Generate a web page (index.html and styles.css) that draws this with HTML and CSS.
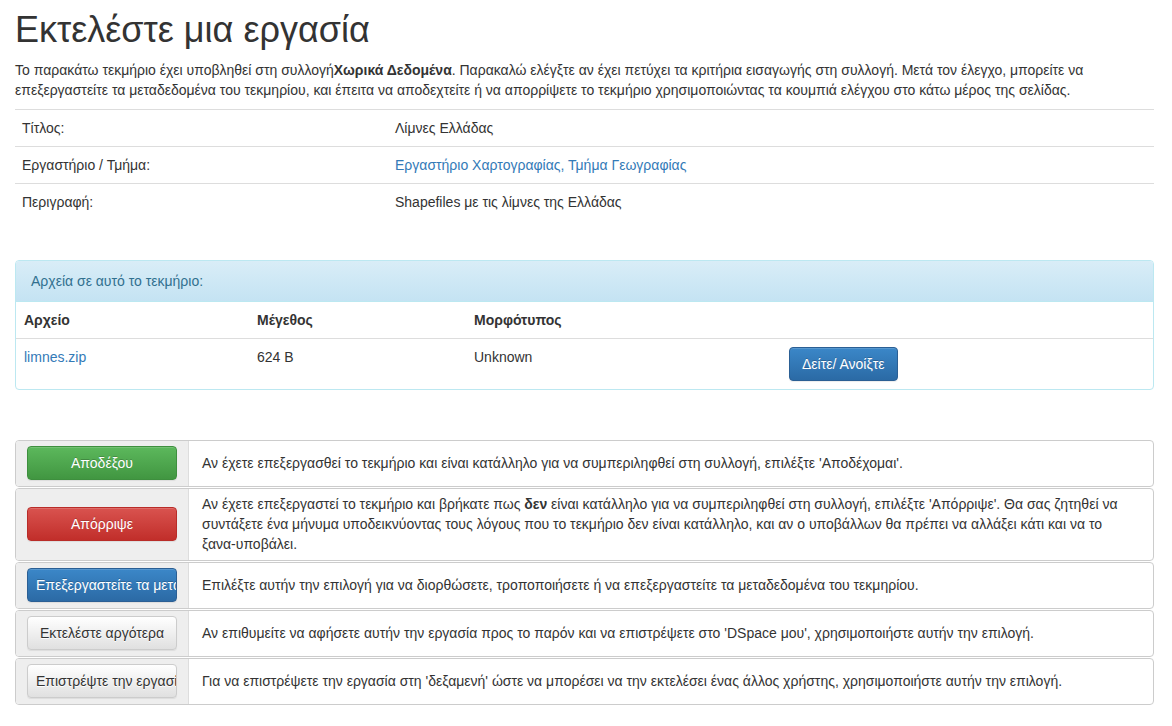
FILE: index.html
```html
<!DOCTYPE html>
<html lang="el">
<head>
<meta charset="utf-8">
<title>Εκτελέστε μια εργασία</title>
<link rel="stylesheet" href="styles.css">
</head>
<body>
<div class="page">
  <h1 class="page-title">Εκτελέστε μια εργασία</h1>
  <p class="intro">Το παρακάτω τεκμήριο έχει υποβληθεί στη συλλογή<strong>Χωρικά Δεδομένα</strong>. Παρακαλώ ελέγξτε αν έχει πετύχει τα κριτήρια εισαγωγής στη συλλογή. Μετά τον έλεγχο, μπορείτε να επεξεργαστείτε τα μεταδεδομένα του τεκμηρίου, και έπειτα να αποδεχτείτε ή να απορρίψετε το τεκμήριο χρησιμοποιώντας τα κουμπιά ελέγχου στο κάτω μέρος της σελίδας.</p>

  <table class="meta">
    <tr><td class="meta-label">Τίτλος:</td><td>Λίμνες Ελλάδας</td></tr>
    <tr><td class="meta-label">Εργαστήριο / Τμήμα:</td><td><a class="link" href="#">Εργαστήριο Χαρτογραφίας, Τμήμα Γεωγραφίας</a></td></tr>
    <tr><td class="meta-label">Περιγραφή:</td><td>Shapefiles με τις λίμνες της Ελλάδας</td></tr>
  </table>

  <div class="panel">
    <div class="panel-heading">Αρχεία σε αυτό το τεκμήριο:</div>
    <table class="files">
      <thead>
        <tr><th class="c1">Αρχείο</th><th class="c2">Μέγεθος</th><th class="c3">Μορφότυπος</th><th></th></tr>
      </thead>
      <tbody>
        <tr><td><a class="link" href="#">limnes.zip</a></td><td>624 B</td><td>Unknown</td><td><a class="btn btn-primary" href="#">Δείτε/ Ανοίξτε</a></td></tr>
      </tbody>
    </table>
  </div>

  <div class="actions">
    <div class="action">
      <div class="action-btn"><a class="btn btn-success" href="#">Αποδέξου</a></div>
      <div class="action-text"><div>Αν έχετε επεξεργασθεί το τεκμήριο και είναι κατάλληλο για να συμπεριληφθεί στη συλλογή, επιλέξτε 'Αποδέχομαι'.</div></div>
    </div>
    <div class="action">
      <div class="action-btn"><a class="btn btn-danger" href="#">Απόρριψε</a></div>
      <div class="action-text"><div>Αν έχετε επεξεργαστεί το τεκμήριο και βρήκατε πως <strong>δεν</strong> είναι κατάλληλο για να συμπεριληφθεί στη συλλογή, επιλέξτε 'Απόρριψε'. Θα σας ζητηθεί να συντάξετε ένα μήνυμα υποδεικνύοντας τους λόγους που το τεκμήριο δεν είναι κατάλληλο, και αν ο υποβάλλων θα πρέπει να αλλάξει κάτι και να το <span class="nowrap">ξανα-υποβάλει.</span></div></div>
    </div>
    <div class="action">
      <div class="action-btn"><a class="btn btn-primary" href="#">Επεξεργαστείτε τα μεταδεδομένα</a></div>
      <div class="action-text"><div>Επιλέξτε αυτήν την επιλογή για να διορθώσετε, τροποποιήσετε ή να επεξεργαστείτε τα μεταδεδομένα του τεκμηρίου.</div></div>
    </div>
    <div class="action">
      <div class="action-btn"><a class="btn btn-default" href="#">Εκτελέστε αργότερα</a></div>
      <div class="action-text"><div>Αν επιθυμείτε να αφήσετε αυτήν την εργασία προς το παρόν και να επιστρέψετε στο 'DSpace μου', χρησιμοποιήστε αυτήν την επιλογή.</div></div>
    </div>
    <div class="action">
      <div class="action-btn"><a class="btn btn-default" href="#">Επιστρέψτε την εργασία</a></div>
      <div class="action-text"><div>Για να επιστρέψετε την εργασία στη 'δεξαμενή' ώστε να μπορέσει να την εκτελέσει ένας άλλος χρήστης, χρησιμοποιήστε αυτήν την επιλογή.</div></div>
    </div>
  </div>
</div>
</body>
</html>
```
FILE: styles.css
```css
* { box-sizing: border-box; }
html, body { margin: 0; padding: 0; background: #fff; }
body {
  font-family: "Liberation Sans", Arial, sans-serif;
  font-size: 14px;
  line-height: 20px;
  color: #333;
}
.page { padding: 0 18px 0 15px; }

.page-title {
  font-size: 36px;
  font-weight: normal;
  line-height: 40px;
  margin: 10px 0 10px;
  color: #333;
}
.intro { margin: 0 0 9px; }
.intro strong { font-weight: bold; }
.nowrap { white-space: nowrap; }

.link { color: #337ab7; text-decoration: none; }

.meta { width: 100%; border-collapse: collapse; margin-bottom: 40px; }
.meta td { border-top: 1px solid #ddd; padding: 8px 8px; vertical-align: top; }
.meta-label { width: 372px; padding-left: 7px !important; }

.panel {
  border: 1px solid #bce8f1;
  border-radius: 4px;
  margin-bottom: 50px;
  overflow: hidden;
}
.panel-heading {
  padding: 10px 15px;
  color: #31708f;
  background: linear-gradient(to bottom, #d9edf7 0%, #c4e3f3 100%);
  border-bottom: 1px solid #bce8f1;
}
.files { width: 100%; border-collapse: collapse; }
.files th { text-align: left; font-weight: bold; padding: 8px; border-bottom: 1px solid #ddd; }
.files td { padding: 8px; vertical-align: top; }
.files .c1 { width: 233px; }
.files .c2 { width: 217px; }
.files .c3 { width: 315px; }

.btn {
  display: inline-block;
  padding: 6px 12px;
  font-size: 14px;
  line-height: 20px;
  border: 1px solid transparent;
  border-radius: 4px;
  text-decoration: none;
  text-align: center;
  white-space: nowrap;
  box-shadow: inset 0 1px 0 rgba(255,255,255,.15), 0 1px 1px rgba(0,0,0,.075);
}
.btn-primary {
  color: #fff;
  text-shadow: 0 -1px 0 rgba(0,0,0,.2);
  background: linear-gradient(to bottom, #3b87c8 0%, #2b6aa5 100%);
  border-color: #2b5f94;
}
.btn-success {
  color: #fff;
  text-shadow: 0 -1px 0 rgba(0,0,0,.2);
  background: linear-gradient(to bottom, #5cb85c 0%, #419641 100%);
  border-color: #3e8f3e;
}
.btn-danger {
  color: #fff;
  text-shadow: 0 -1px 0 rgba(0,0,0,.2);
  background: linear-gradient(to bottom, #d9534f 0%, #c12e2a 100%);
  border-color: #b92c28;
}
.btn-default {
  color: #333;
  text-shadow: 0 1px 0 #fff;
  background: linear-gradient(to bottom, #fff 0%, #e0e0e0 100%);
  border-color: #ccc;
}

.actions { display: flex; flex-direction: column; gap: 1px; }
.action {
  display: flex;
  border: 1px solid #ccc;
  border-radius: 4px;
  overflow: hidden;
}
.action-btn {
  flex: 0 0 173px;
  background: #eee;
  border-right: 1px solid #ddd;
  padding: 5px 11px 6px 11px;
  display: flex;
  align-items: center;
}
.action-btn .btn {
  display: block;
  width: 150px;
  padding: 6px 8px;
  overflow: hidden;
}
.action-text {
  flex: 1;
  padding: 5px 12px 6px 13px;
  display: flex;
  align-items: center;
}
```
